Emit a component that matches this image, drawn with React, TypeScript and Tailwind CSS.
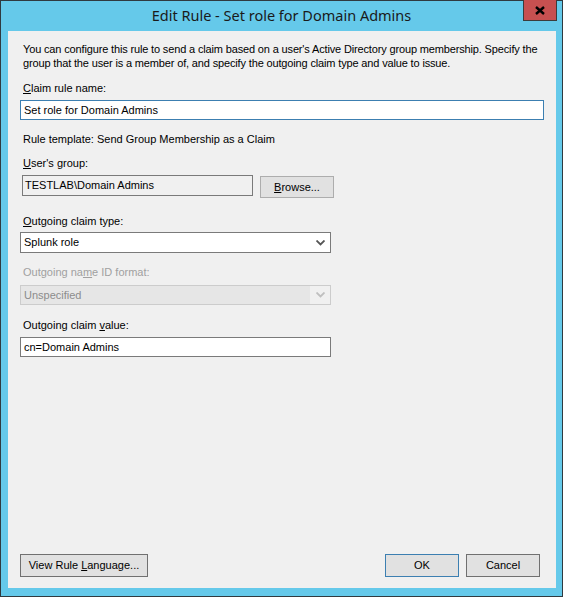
import React from "react";

const Chevron = ({ color }: { color: string }) => (
  <svg width="9" height="6" viewBox="0 0 9 6" className="shrink-0">
    <path d="M0.5 0.5 L4.5 4.5 L8.5 0.5" fill="none" stroke={color} strokeWidth="1.8" />
  </svg>
);

const App: React.FC = () => {
  return (
    <div className="w-[563px] h-[597px] border border-[#2f3a40] bg-[#65c9ea] flex flex-col font-['Liberation_Sans',Arial,sans-serif] text-[11px] text-black">
      {/* title bar */}
      <div className="relative h-[30px] shrink-0 flex items-center justify-center">
        <span className="font-['Noto_Sans',sans-serif] text-[14.5px] text-[#1a1a1a] leading-none -mt-[2px]">
          Edit Rule - Set role for Domain Admins
        </span>
        <div className="absolute -top-px right-[5px] w-[34px] h-[21px] bg-[#c75050] border border-t-0 border-[#3c3c3c] flex items-center justify-center">
          <svg width="10" height="9" viewBox="0 0 10 9">
            <path d="M1 1 L9 8 M9 1 L1 8" stroke="#000" strokeWidth="2.4" />
          </svg>
        </div>
      </div>

      {/* client area */}
      <div className="flex-1 ml-[7px] mr-[6px] mb-[8px] bg-[#f0f0f0] flex flex-col">
        <p className="pt-[11px] pl-[15px] leading-[14px] tracking-[-0.15px]">
          You can configure this rule to send a claim based on a user's Active Directory group membership. Specify the group that the user is a member of, and specify the outgoing claim type and value to issue.
        </p>

        <div className="mt-[11px] ml-[15px] leading-[14px]">
          <span className="underline">C</span>laim rule name:
        </div>
        <div className="mt-[5px] ml-[12px] w-[524px] h-[20px] border border-[#3c7fb1] bg-white flex items-center px-[3px]">
          Set role for Domain Admins
        </div>

        <div className="mt-[12px] ml-[15px] leading-[14px]">Rule template: Send Group Membership as a Claim</div>

        <div className="mt-[10px] ml-[15px] leading-[14px]">
          <span className="underline">U</span>ser's group:
        </div>
        <div className="mt-[5px] ml-[14px] flex items-start gap-[7px]">
          <div className="w-[231px] h-[21px] border border-[#7a7a7a] bg-[#f0f0f0] flex items-center px-[2px]">
            TESTLAB\Domain Admins
          </div>
          <div className="mt-[1px] w-[74px] h-[22px] border border-[#adadad] bg-[#e1e1e1] flex items-center justify-center">
            <span><span className="underline">B</span>rowse...</span>
          </div>
        </div>

        <div className="mt-[16px] ml-[15px] leading-[14px]">
          <span className="underline">O</span>utgoing claim type:
        </div>
        <div className="mt-[4px] ml-[12px] w-[311px] h-[21px] border border-[#7a7a7a] bg-white flex items-center justify-between pl-[3px] pr-[5px]">
          <span>Splunk role</span>
          <Chevron color="#555555" />
        </div>

        <div className="mt-[12px] ml-[15px] leading-[14px] text-[#a0a0a0]">
          Outgoing na<span className="underline">m</span>e ID format:
        </div>
        <div className="mt-[6px] ml-[12px] w-[311px] h-[20px] border border-[#cccccc] bg-[#f0f0f0] flex items-stretch">
          <div className="flex-1 bg-[#e6e6e6] flex items-center pl-[3px] text-[#8c8c8c]">Unspecified</div>
          <div className="w-[20px] flex items-center justify-center">
            <Chevron color="#bfbfbf" />
          </div>
        </div>

        <div className="mt-[13px] ml-[15px] leading-[14px]">
          Outgoing claim <span className="underline">v</span>alue:
        </div>
        <div className="mt-[5px] ml-[12px] w-[311px] h-[20px] border border-[#7a7a7a] bg-white flex items-center px-[3px]">
          cn=Domain Admins
        </div>

        <div className="mt-auto mb-[11px] flex items-center px-[12px]">
          <div className="w-[128px] h-[23px] border border-[#707070] bg-[#e1e1e1] flex items-center justify-center">
            <span>View Rule <span className="underline">L</span>anguage...</span>
          </div>
          <div className="ml-auto w-[74px] h-[23px] border border-[#3c7fb1] bg-[#e1e1e1] flex items-center justify-center">
            OK
          </div>
          <div className="ml-[7px] mr-[4px] w-[74px] h-[23px] border border-[#707070] bg-[#e1e1e1] flex items-center justify-center">
            Cancel
          </div>
        </div>
      </div>
    </div>
  );
};

export default App;
